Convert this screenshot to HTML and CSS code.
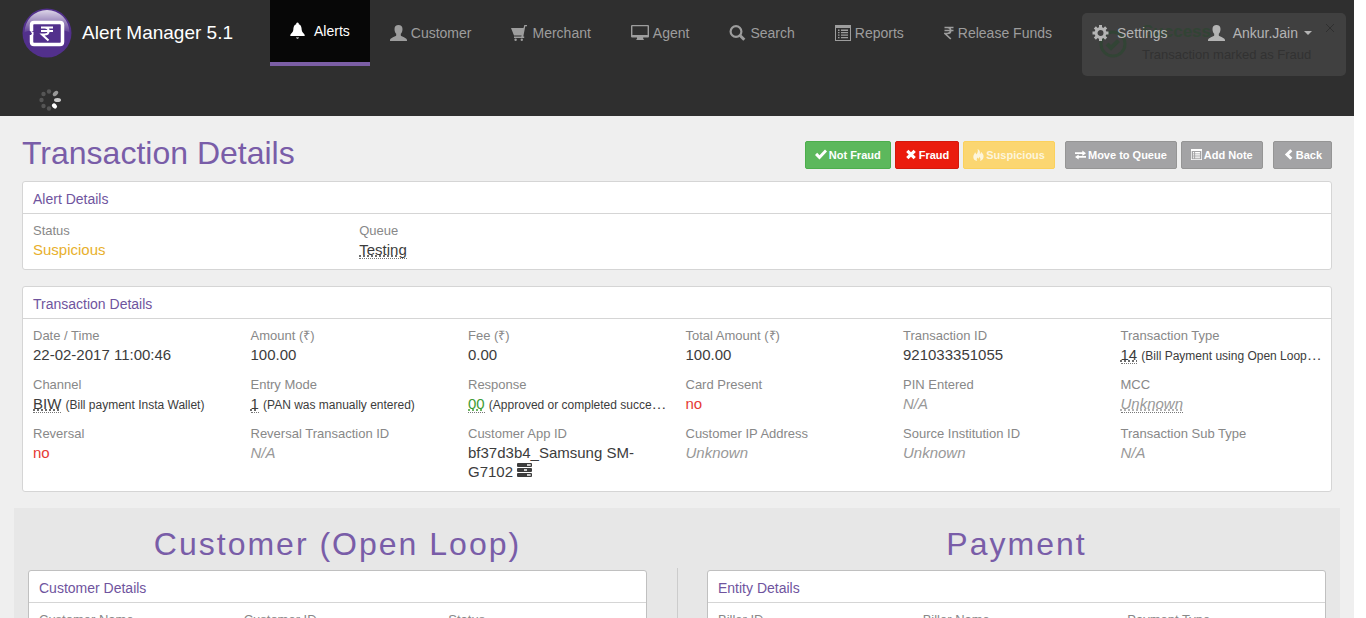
FILE: index.html
```html
<!DOCTYPE html>
<html lang="en">
<head>
<meta charset="utf-8">
<title>Alert Manager 5.1 - Transaction Details</title>
<link rel="stylesheet" href="styles.css">
</head>
<body>
<svg class="sprite" aria-hidden="true">
  <symbol id="i-user" viewBox="0 0 17 16"><path d="M8.500 0C6 0 4.500 1.600 4.500 4c0 2.300.6 3.700 1.700 4.800v1.600C5.800 11.500 0 12.500 0 15.200V16h17v-.8c0-2.700-5.800-3.700-6.200-4.800V8.800c1.100-1.100 1.700-2.500 1.700-4.800 0-2.400-1.500-4-4-4z"/></symbol>
  <symbol id="i-cart" viewBox="0 0 17 16"><path d="M0 3h12.500L13.300 0H16v1.300h-1.700L12.300 11.500h.9v1.600H3v-1.600h7.300l.3-1H3z"/><circle cx="4.600" cy="14.800" r="1.200"/><circle cx="10.800" cy="14.800" r="1.200"/></symbol>
  <symbol id="i-monitor" viewBox="0 0 18 16"><path fill-rule="evenodd" d="M1 0h16q1 0 1 1v10.500q0 1-1 1h-4.800v1.300L13.200 15H5l1-1.200v-1.300H1q-1 0-1-1V1q0-1 1-1zm.4 1.300v8.700h15.200V1.300z"/></symbol>
  <symbol id="i-search" viewBox="0 0 16 16"><circle cx="6.500" cy="6.500" r="5.400" fill="none" stroke="currentColor" stroke-width="2.200"/><path d="M10.300 10.300l4.500 4.500" stroke="currentColor" stroke-width="3"/></symbol>
  <symbol id="i-list" viewBox="0 0 16 16"><path fill-rule="evenodd" d="M0 0h16v16H0zM1 3v12h14V3zM3 4.500h1.500V6H3zm3 0h7V6H6zM3 7h1.500v1.300H3zm3 0h7v1.300H6zM3 9.500h1.500v1.300H3zm3 0h7v1.300H6zM3 12h1.500v1.300H3zm3 0h7v1.300H6z"/></symbol>
  <symbol id="i-rupee" viewBox="0 0 10 14"><path d="M.5 1.500H9.500M.5 4.500H9.500M.5 1.500h2.800c4.500 0 4.500 6 0 6H1l5.800 5.500" fill="none" stroke="currentColor" stroke-width="1.700"/></symbol>
  <symbol id="i-gear" viewBox="0 0 16 16"><circle cx="8" cy="8" r="4.500" fill="none" stroke="currentColor" stroke-width="3"/><path d="M8 0v3M8 13v3M0 8h3M13 8h3M2.350 2.350l2.100 2.100M11.550 11.550l2.100 2.100M2.350 13.650l2.100-2.100M11.550 4.450l2.100-2.100" stroke="currentColor" stroke-width="3"/></symbol>
  <symbol id="i-bell" viewBox="0 0 16 18"><path d="M8 0C6.900 0 6.600 1 6.600 1.800 4 2.700 3.700 5 3.500 8 3.400 10.500 1 11.500.3 13.200q-.3 1.100.5 1.100h14.400q.8 0 .5-1.100C15 11.500 12.600 10.500 12.500 8 12.300 5 12 2.700 9.400 1.800 9.400 1 9.100 0 8 0zM6.300 16h3.400q-.4 1.200-1.700 1.200T6.300 16z"/></symbol>
  <symbol id="i-ok" viewBox="0 0 12 11"><path d="M0 6l2.200-2.200 2.300 2.400L10 .5 12 2.500 4.500 10.500z"/></symbol>
  <symbol id="i-remove" viewBox="0 0 11 11"><path d="M1.800 1.800l7.400 7.400M9.200 1.800L1.800 9.200" stroke="currentColor" stroke-width="3.200"/></symbol>
  <symbol id="i-fire" viewBox="0 0 11 12"><path d="M4.600 0C7 1.300 7.300 3.200 6.800 5c1-.4 1.200-1.300 1.100-2.300C9.700 4.200 11 6 10.500 8.300 10.100 10.500 8.700 11.500 7 12c.9-1.700.5-3-.9-4.300.1 1.100-.2 1.700-.8 2.100-.2-.6-.5-.9-.9-1.200C3.500 9.900 3.600 11 4.200 12 1.700 11.600.3 10 .3 7.900.3 5.900 1.600 5 2 3.300c.8.600 1 1.400 1 2.200C4.800 4.300 5.200 2.200 4.600 0z"/></symbol>
  <symbol id="i-transfer" viewBox="0 0 12 10"><path d="M0 2h8V0l4 3-4 3V4H0zM12 6H4V4.500L0 7.200 4 10V8h8z"/></symbol>
  <symbol id="i-back" viewBox="0 0 10 11"><path d="M7.800 1.200L3.500 5.500l4.300 4.300" fill="none" stroke="currentColor" stroke-width="3"/></symbol>
  <symbol id="i-tasks" viewBox="0 0 15 14"><path fill-rule="evenodd" d="M1 0h13q1 0 1 1v2q0 1-1 1H1Q0 4 0 3V1q0-1 1-1zm9 1.300v1.400h3.700V1.300zM1 5h13q1 0 1 1v2q0 1-1 1H1Q0 9 0 8V6q0-1 1-1zm6 1.300v1.400h3V6.300zM1 10h13q1 0 1 1v2q0 1-1 1H1q-1 0-1-1v-2q0-1 1-1zm9 1.300v1.400h3.700v-1.400z"/></symbol>
</svg>

<div class="page">
  <header class="topbar">
    <div class="toast" role="status">
      <svg class="toast-icon" viewBox="0 0 28 28" aria-hidden="true"><circle cx="14" cy="14" r="12" fill="none" stroke="currentColor" stroke-width="3"/><path d="M8 14l4 4 7.500-7.500" fill="none" stroke="currentColor" stroke-width="4"/></svg>
      <div class="toast-text">
        <strong class="toast-title">Success</strong>
        <span>Transaction marked as Fraud</span>
      </div>
      <button class="toast-close" type="button" aria-label="Close"><svg width="8" height="8" viewBox="0 0 8 8"><path d="M0 0l8 8M8 0L0 8" stroke="currentColor"/></svg></button>
    </div>
    <div class="navbar">
      <a class="brand" href="#">
        <svg class="logo" viewBox="0 0 50 50" aria-hidden="true">
          <defs>
            <linearGradient id="shine" x1="0" y1="0" x2="0" y2="1"><stop offset="0" stop-color="#fff" stop-opacity=".8"/><stop offset="1" stop-color="#fff" stop-opacity=".08"/></linearGradient>
          </defs>
          <circle cx="25" cy="25" r="24.500" fill="#52308c"/>
          <path d="M2.500 24.500a22.500 22.500 0 0 1 45 0C44 20 6 20 2.500 24.500z" fill="url(#shine)"/>
          <path d="M9.500 23V17q0-2.500 2.500-2.500h26q2.500 0 2.500 2.500v17q0 2.500-2.500 2.500H12q-2.500 0-2.500-2.500v-7" fill="#52308c" stroke="#fff" stroke-width="3.500"/>
          <path d="M8 22.500l3.500 1.500v3L8 28.500l2-3z" fill="#fff"/>
          <path d="M19 19.500h12M19 23h12M19 19.500h3.500c5.500 0 5.500 7 0 7H20l6.500 6" fill="none" stroke="#fff" stroke-width="2"/>
        </svg>
        <span>Alert Manager 5.1</span>
      </a>
      <nav class="nav">
        <a class="nav-item active" href="#"><svg class="ic-bell"><use href="#i-bell"/></svg>Alerts</a>
        <a class="nav-item" href="#"><svg class="ic"><use href="#i-user"/></svg>Customer</a>
        <a class="nav-item" href="#"><svg class="ic"><use href="#i-cart"/></svg>Merchant</a>
        <a class="nav-item" href="#"><svg class="ic-wide"><use href="#i-monitor"/></svg>Agent</a>
        <a class="nav-item" href="#"><svg class="ic"><use href="#i-search"/></svg>Search</a>
        <a class="nav-item" href="#"><svg class="ic-box"><use href="#i-list"/></svg>Reports</a>
        <a class="nav-item" href="#"><svg class="ic-slim"><use href="#i-rupee"/></svg>Release Funds</a>
      </nav>
      <nav class="nav nav-user">
        <a class="nav-item" href="#"><svg class="ic"><use href="#i-gear"/></svg>Settings</a>
        <a class="nav-item" href="#"><svg class="ic"><use href="#i-user"/></svg>Ankur.Jain<span class="caret"></span></a>
      </nav>
    </div>
    <svg class="spinner" viewBox="0 0 24 24" aria-hidden="true">
      <g fill="#555"><circle cx="11" cy="3.500" r="2.200"/><circle cx="5.500" cy="6" r="2.200"/><circle cx="3.500" cy="12" r="2.200"/><circle cx="5.500" cy="18" r="2.200"/><circle cx="11" cy="20.500" r="2.200"/></g>
      <ellipse cx="17.500" cy="5.500" rx="3.200" ry="2" transform="rotate(-45 17.500 5.500)" fill="#999"/>
      <ellipse cx="19.500" cy="12" rx="3.500" ry="2" fill="#ccc"/>
      <ellipse cx="16.500" cy="18" rx="2.800" ry="2.200" transform="rotate(45 16.500 18)" fill="#fff"/>
    </svg>
  </header>

  <main>
    <div class="title-row">
      <h1>Transaction Details</h1>
      <div class="actions">
        <button type="button" class="btn btn-ok"><svg width="12" height="11"><use href="#i-ok"/></svg>Not Fraud</button>
        <button type="button" class="btn btn-bad"><svg width="12" height="11"><use href="#i-remove"/></svg>Fraud</button>
        <button type="button" class="btn btn-warn"><svg width="11" height="12"><use href="#i-fire"/></svg>Suspicious</button>
        <button type="button" class="btn btn-gap"><svg width="11" height="10"><use href="#i-transfer"/></svg>Move to Queue</button>
        <button type="button" class="btn"><svg width="11" height="11"><use href="#i-list"/></svg>Add Note</button>
        <button type="button" class="btn btn-gap"><svg width="11" height="11"><use href="#i-back"/></svg>Back</button>
      </div>
    </div>

    <section class="panel">
      <h3>Alert Details</h3>
      <dl class="fields cols-4">
        <div><dt>Status</dt><dd class="warn">Suspicious</dd></div>
        <div><dt>Queue</dt><dd><abbr>Testing</abbr></dd></div>
      </dl>
    </section>

    <section class="panel">
      <h3>Transaction Details</h3>
      <dl class="fields cols-6">
        <div><dt>Date / Time</dt><dd>22-02-2017 11:00:46</dd></div>
        <div><dt>Amount (₹)</dt><dd>100.00</dd></div>
        <div><dt>Fee (₹)</dt><dd>0.00</dd></div>
        <div><dt>Total Amount (₹)</dt><dd>100.00</dd></div>
        <div><dt>Transaction ID</dt><dd>921033351055</dd></div>
        <div><dt>Transaction Type</dt><dd class="line"><abbr>14</abbr> <small>(Bill Payment using Open Loop</small>…</dd></div>
        <div><dt>Channel</dt><dd class="line"><abbr>BIW</abbr> <small>(Bill payment Insta Wallet)</small></dd></div>
        <div><dt>Entry Mode</dt><dd class="line"><abbr>1</abbr> <small>(PAN was manually entered)</small></dd></div>
        <div><dt>Response</dt><dd class="line"><abbr class="good">00</abbr> <small>(Approved or completed succe</small>…</dd></div>
        <div><dt>Card Present</dt><dd class="bad">no</dd></div>
        <div><dt>PIN Entered</dt><dd class="none">N/A</dd></div>
        <div><dt>MCC</dt><dd><abbr class="none">Unknown</abbr></dd></div>
        <div><dt>Reversal</dt><dd class="bad">no</dd></div>
        <div><dt>Reversal Transaction ID</dt><dd class="none">N/A</dd></div>
        <div><dt>Customer App ID</dt><dd>bf37d3b4_Samsung SM-G7102 <svg class="ic-tasks"><use href="#i-tasks"/></svg></dd></div>
        <div><dt>Customer IP Address</dt><dd class="none">Unknown</dd></div>
        <div><dt>Source Institution ID</dt><dd class="none">Unknown</dd></div>
        <div><dt>Transaction Sub Type</dt><dd class="none">N/A</dd></div>
      </dl>
    </section>

    <div class="parties">
      <section class="party">
        <h2>Customer (Open Loop)</h2>
        <div class="panel">
          <h3>Customer Details</h3>
          <dl class="fields cols-3">
            <div><dt>Customer Name</dt></div>
            <div><dt>Customer ID</dt></div>
            <div><dt>Status</dt></div>
          </dl>
        </div>
      </section>
      <div class="divider"></div>
      <section class="party">
        <h2>Payment</h2>
        <div class="panel">
          <h3>Entity Details</h3>
          <dl class="fields cols-3">
            <div><dt>Biller ID</dt></div>
            <div><dt>Biller Name</dt></div>
            <div><dt>Payment Type</dt></div>
          </dl>
        </div>
      </section>
    </div>
  </main>
</div>
</body>
</html>
```
FILE: styles.css
```css
* { box-sizing: border-box; }

body {
  margin: 0;
  padding-right: 12px;
  height: 100vh;
  overflow: hidden;
  background: #fff;
  color: #3c3c3c;
  font-family: "Liberation Sans", Arial, sans-serif;
  font-size: 15px;
}

h1, h2, h3, dl, dd { margin: 0; font-weight: normal; }
a { text-decoration: none; }
svg { fill: currentColor; flex: none; }
.sprite { position: absolute; width: 0; height: 0; }

.page { min-height: 100vh; background: #efefef; }

/* Top bar */
.topbar { position: relative; height: 116px; background: #2f2f2f; }
.navbar { position: relative; display: flex; padding: 0 22px; }
.brand {
  display: flex;
  flex: none;
  align-items: center;
  gap: 10px;
  width: 248px;
  height: 66px;
  color: #fff;
  font-size: 19px;
}
.logo { width: 50px; height: 50px; }
.nav { display: flex; }
.nav-user { margin-left: auto; }
.nav-item {
  display: flex;
  align-items: center;
  gap: 4px;
  height: 66px;
  padding: 0 20px;
  color: #9d9d9d;
  font-size: 14px;
  white-space: nowrap;
}
.nav-item.active {
  gap: 9px;
  background: #070707;
  border-bottom: 4px solid #7b5ea5;
  color: #fff;
}
.nav-user .nav-item { gap: 6px; color: #b4b4b4; }
.nav-user .ic { margin-right: 2px; }
.ic { width: 17px; height: 16px; }
.ic-box { width: 16px; height: 16px; }
.ic-wide { width: 18px; height: 16px; }
.ic-slim { width: 10px; height: 14px; }
.ic-bell { width: 15px; height: 18px; }
.caret {
  border: 4px solid transparent;
  border-top-color: currentColor;
  border-bottom: 0;
}
.spinner { display: block; width: 24px; height: 24px; margin: 22px 0 0 38px; }

/* Fading notification behind the user menu */
.toast {
  position: absolute;
  top: 13px;
  right: 8px;
  display: flex;
  width: 264px;
  height: 63px;
  padding: 9px 12px 0 17px;
  border-radius: 5px;
  background: #404040;
  color: #323232;
}
.toast-icon { width: 28px; height: 28px; margin: 8px 15px 0 0; color: #324435; }
.toast-text { display: flex; flex-direction: column; gap: 3px; font-size: 13px; line-height: 20px; white-space: nowrap; }
.toast-title { color: #324435; font-size: 17px; }
.toast-close { align-self: flex-start; margin: 2px 0 0 auto; padding: 0; border: 0; background: none; color: #2f2f2f; }
.toast-close svg { display: block; }

/* Title and actions */
.title-row { display: flex; justify-content: space-between; align-items: center; height: 65px; padding: 0 22px; }
h1, h2 { color: #795da8; font-size: 32px; line-height: 36px; }
h1 { padding-top: 8px; }
.actions { display: flex; gap: 4px; padding-top: 12px; }
.btn {
  display: flex;
  align-items: center;
  gap: 2px;
  height: 28px;
  padding: 0 9px;
  border: 1px solid #959595;
  border-radius: 2px;
  background: #a3a3a5;
  color: #fff;
  font: bold 11px "Liberation Sans", Arial, sans-serif;
  white-space: nowrap;
}
.btn-ok { background: #5cb85c; border-color: #4cae4c; }
.btn-bad { background: #ea1c0d; border-color: #d2190c; }
.btn-warn { background: #fbd671; border-color: #fbd15c; color: #fdf5dc; }
.btn-gap { margin-left: 6px; }

/* Panels */
.panel {
  margin: 0 22px 16px;
  border: 1px solid #d5d5d5;
  border-radius: 3px;
  background: #fff;
}
h3 {
  padding: 9px 10px 5px;
  border-bottom: 1px solid #d5d5d5;
  color: #6f549e;
  font-size: 14px;
  line-height: 17px;
}
.fields {
  display: grid;
  gap: 11px 15px;
  padding: 7px 8px 10px 10px;
  line-height: 19px;
}
.fields > div { min-width: 0; }
.cols-3 { grid-template-columns: repeat(3, minmax(0, 1fr)); }
.cols-4 { grid-template-columns: repeat(4, minmax(0, 1fr)); }
.cols-6 { grid-template-columns: repeat(6, minmax(0, 1fr)); }
dt { color: #888; font-size: 13px; }
.line { white-space: nowrap; }
small { font-size: 12px; line-height: 12px; }
abbr { border-bottom: 1px dotted #777; text-decoration: underline dotted; }
.warn { color: #e8b02c; }
.good { color: #3f9c35; }
.bad { color: #e53935; }
.none { color: #999; font-style: italic; }
.ic-tasks { width: 15px; height: 14px; }

/* Customer and payment columns */
.parties { display: flex; margin: 0 14px; padding: 18px 14px 0; background: #e7e7e7; }
.party { flex: 1; min-width: 0; }
.party .panel { margin: 0; min-height: 80px; border-color: #c0c0c0; }
h2 { margin-bottom: 8px; text-align: center; letter-spacing: 2px; }
.divider { width: 1px; margin: 42px 29px 0 30px; background: #ccc; }
```
